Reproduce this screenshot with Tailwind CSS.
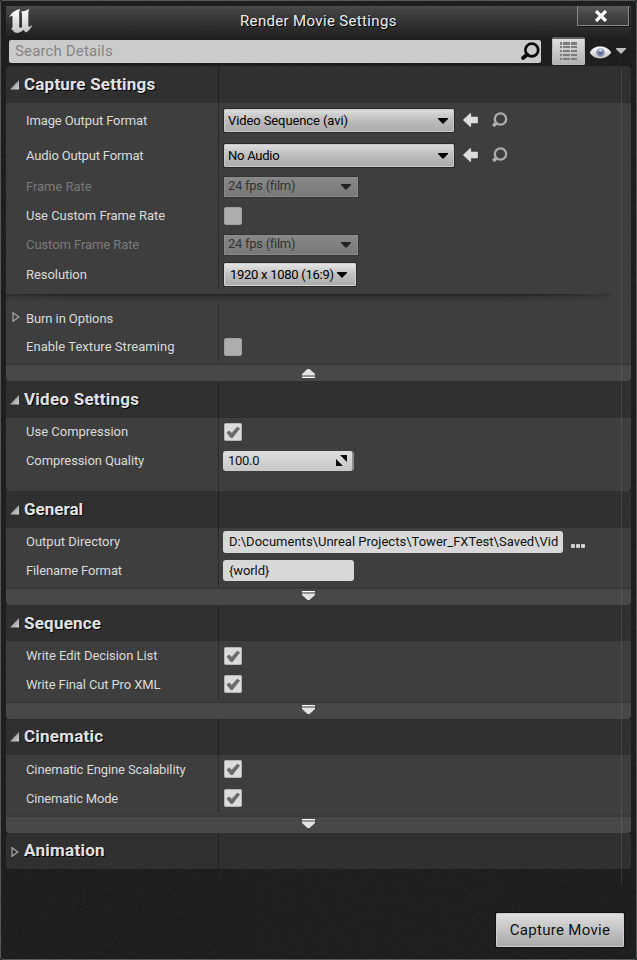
<!DOCTYPE html>
<html lang="en">
<head>
<meta charset="utf-8">
<title>Render Movie Settings</title>
<script src="https://cdn.jsdelivr.net/npm/@tailwindcss/browser@4"></script>
</head>
<body class="bg-[#1e1e1e]">
<svg width="0" height="0" class="absolute">
  <defs>
    <linearGradient id="silver" x1="0" y1="0" x2="0" y2="1"><stop offset="0" stop-color="#fff"/><stop offset="1" stop-color="#c4c4c4"/></linearGradient>
    <linearGradient id="tri" x1="0" y1="0" x2="1" y2="1"><stop offset="0" stop-color="#777"/><stop offset="1" stop-color="#d4d4d4"/></linearGradient>
    <symbol id="open" viewBox="0 0 10 10"><path d="M9 0V9.500H0Z" fill="url(#tri)"/></symbol>
    <symbol id="closed" viewBox="0 0 8 10"><path d="M1 .7V9.300L6.800 5Z" fill="none" stroke="#a5a5a5" stroke-width="1.200"/></symbol>
    <symbol id="check" viewBox="0 0 18 18"><rect x=".5" y=".5" width="17" height="17" rx="1" fill="#dcdcdc" stroke="#b4b4b4"/><path d="M2.800 9.700L5.300 7.800L7.600 10.200L13.300 4L15.700 5.600L8.500 14.700H6.800Z" fill="#6a6a6a" stroke="#6a6a6a" stroke-width=".6"/></symbol>
    <symbol id="back" viewBox="0 0 15 14"><path d="M.8 7L7.500 .8V4.300H14.200V9.700H7.500V13.200Z" fill="#dedede" stroke="#dedede" stroke-width="1.200" stroke-linejoin="round"/></symbol>
    <symbol id="lens" viewBox="0 0 20 19"><circle cx="11.800" cy="8" r="6.400" fill="none" stroke="currentColor" stroke-width="2.700"/><path d="M7.200 12.500L3 16" stroke="currentColor" stroke-width="3.800" stroke-linecap="round"/></symbol>
    <symbol id="find" viewBox="0 0 16 15"><circle cx="8.500" cy="7" r="5.700" fill="none" stroke="#adadad" stroke-width="2.300"/><path d="M5 10.500L1.200 14" stroke="#adadad" stroke-width="3.600"/></symbol>
    <symbol id="down" viewBox="0 0 10 6"><path d="M0 0H10V1L5 6L0 1Z" fill="currentColor"/></symbol>
    <symbol id="more" viewBox="0 0 13 9"><path d="M0 0H13V1H0Z" fill="#fff"/><path d="M0 1H13V2H0Z" fill="#8d8d8d"/><path d="M0 2.500H13V4L7.500 9H5.500L0 4Z" fill="#e3e3e3"/></symbol>
    <symbol id="less" viewBox="0 0 13 9"><path d="M0 8H13V9H0Z" fill="#fff"/><path d="M0 7H13V8H0Z" fill="#8d8d8d"/><path d="M0 6.500H13V5L7.500 0H5.500L0 5Z" fill="#e3e3e3"/></symbol>
  </defs>
</svg>

<div class="relative isolate flex h-[960px] w-[637px] flex-col overflow-hidden rounded-[3px] border border-[#565858] bg-[#1c1c1c] px-[5px] pt-[5px] font-[Roboto,sans-serif] text-[13px] leading-none text-[#dadada]">
  <svg class="absolute inset-0 -z-10 h-full w-full opacity-[0.04]"><filter id="grain"><feTurbulence type="fractalNoise" baseFrequency=".28" numOctaves="3"/><feColorMatrix type="saturate" values="0"/></filter><rect width="100%" height="100%" filter="url(#grain)"/></svg>

  <header class="relative flex h-[33px] shrink-0 bg-linear-to-b from-[#494949] via-[#333333] to-[#1f1f1f]/60">
    <svg class="ml-[2px] mt-[2px] h-[26px] w-[26px]" viewBox="0 0 26 26"><path d="M1 9.500C3 5 7 2 12.500 1L11.200 3V18C11.200 20 12.500 20.500 14 19V5L13 3.500C16 3.500 18.500 2.500 21.500 .8C20.500 3 20.300 4 20.300 6V17.500C20.300 19.500 22 19 24.500 16.500C23 20.500 20.500 23 18 24.500L15.200 22C13 24 10.500 25.300 8 24.800C5 24.500 6 22.500 3 21L4.500 19.500V8.500C4.500 7 3 8 1 9.500Z" fill="url(#silver)"/></svg>
    <h1 class="flex-1 pl-[206px] pt-[8px] text-[15px] tracking-[0.34px] text-[#eeeeee] [text-shadow:1px_1px_0_#000]">Render Movie Settings</h1>
    <button class="mr-[2px] grid h-[20px] w-[52px] place-items-center border border-t-0 border-[#8a8a8a] bg-linear-to-b from-[#5a5a5a] via-[#444] to-[#383838] shadow-[1px_1px_0_#111]">
      <svg class="-ml-[4px]" width="14" height="12" viewBox="0 0 14 12"><path d="M2 1L12 11M12 1L2 11" stroke="#fff" stroke-width="3.200"/></svg>
    </button>
  </header>

  <div class="flex h-[27px] shrink-0 items-start">
    <div class="ml-[3px] mt-px flex h-[23px] w-[532px] items-center rounded-[2px] bg-[#cbcbcb] pl-[6px] pr-[1px] text-[15px] text-[#858585]"><span class="flex-1 tracking-[0.15px]">Search Details</span><svg class="h-[19px] w-[20px] text-[#0c0c0c]"><use href="#lens"/></svg></div>
    <div class="-mt-[2px] ml-[11px] grid h-[28px] w-[33px] place-items-center rounded-[1px] border border-[#b9b9b9] bg-linear-to-b from-[#e0e0e0] to-[#b2b2b2]">
      <svg width="17" height="18" viewBox="0 0 17 18" shape-rendering="crispEdges" fill="#7d7d7d"><path d="M0 0h2v3H0zM3 0h7v3H3zM11 0h6v3h-6zM0 4h2v2H0zM3 4h7v2H3zM11 4h6v2h-6zM0 8h2v2H0zM3 8h7v2H3zM11 8h6v2h-6zM0 12h2v2H0zM3 12h7v2H3zM11 12h6v2h-6zM0 16h2v2H0zM3 16h7v2H3zM11 16h6v2h-6z"/></svg>
    </div>
    <svg class="ml-[4px] mt-[7px] h-[13px] w-[23px]" viewBox="0 0 23 14"><path d="M0 7C4 -1.500 18 -1.500 23 7C18 15.500 4 15.500 0 7Z" fill="url(#silver)"/><circle cx="11.500" cy="7" r="4.600" fill="#8494b4"/><circle cx="11.500" cy="7.500" r="2.200" fill="#5a6a8f"/><circle cx="11.500" cy="4.500" r="1.600" fill="#d3dbea"/></svg>
    <svg class="ml-[4px] mt-[9px] h-[6px] w-[10px] text-[#bcbcbc]"><use href="#down"/></svg>
  </div>

  <main class="relative flex w-[625px] flex-col">
    <section>
      <div class="flex h-[37px] items-center overflow-hidden rounded-t-[4px] bg-[#303030]"><h2 class="flex h-full w-[213px] items-center border-r border-[#1f1f1f] pl-[4px] text-[17px] font-bold tracking-[0.2px] text-[#e2e2e2] [text-shadow:1px_1px_0_#000]"><svg class="mr-[4px] h-[10px] w-[10px]"><use href="#open"/></svg>Capture Settings</h2></div>
      <div class="rounded-b-[4px] bg-[#3e3e3e]">
        <div class="flex h-[35px]"><div class="flex w-[213px] items-center border-r border-[#2a2a2a] pl-[20px] tracking-[-0.12px]">Image Output Format</div>
          <div class="flex items-center pl-[5px]"><div class="flex h-[23px] w-[230px] items-center justify-between whitespace-nowrap rounded-[1px] border border-[#c9c9c9] bg-linear-to-b from-[#dcdcdc] via-[#bdbdbd] to-[#ababab] pl-[3px] pr-[5px] tracking-[-0.1px] text-black shadow-[0_0_0_1px_#2a2a2a]">Video Sequence (avi)<svg class="h-[6px] w-[10px]"><use href="#down"/></svg></div><svg class="mb-[2px] ml-[9px] h-[14px] w-[15px]"><use href="#back"/></svg><svg class="mb-[2px] ml-[14px] h-[15px] w-[16px]"><use href="#find"/></svg></div></div>
        <div class="flex h-[35px]"><div class="flex w-[213px] items-center border-r border-[#2a2a2a] pl-[20px] tracking-[-0.17px]">Audio Output Format</div>
          <div class="flex items-center pl-[5px]"><div class="flex h-[23px] w-[230px] items-center justify-between whitespace-nowrap rounded-[1px] border border-[#c9c9c9] bg-linear-to-b from-[#dcdcdc] via-[#bdbdbd] to-[#ababab] pl-[3px] pr-[5px] tracking-[-0.25px] text-black shadow-[0_0_0_1px_#2a2a2a]">No Audio<svg class="h-[6px] w-[10px]"><use href="#down"/></svg></div><svg class="mb-[2px] ml-[9px] h-[14px] w-[15px]"><use href="#back"/></svg><svg class="mb-[2px] ml-[14px] h-[15px] w-[16px]"><use href="#find"/></svg></div></div>
        <div class="flex h-[28px]"><div class="flex w-[213px] items-center border-r border-[#2a2a2a] pb-[2px] pl-[20px] tracking-[-0.05px] text-[#7a7a7a]">Frame Rate</div>
          <div class="flex items-center pl-[5px]"><div class="flex h-[20px] w-[134px] items-center justify-between whitespace-nowrap border border-[#8b8b8b] bg-linear-to-b from-[#888] to-[#787878] pb-[2px] pl-[3px] pr-[6px] tracking-[-0.28px] text-[#333] shadow-[0_0_0_1px_#353535]"><span class="-mt-[2px]">24 fps (film)</span><svg class="mt-[2px] h-[6px] w-[10px] text-[#222]"><use href="#down"/></svg></div></div></div>
        <div class="flex h-[29px]"><div class="flex w-[213px] items-center border-r border-[#2a2a2a] pl-[20px] tracking-[-0.03px]">Use Custom Frame Rate</div>
          <div class="flex items-center pl-[5px]"><div class="h-[18px] w-[18px] rounded-[2px] border border-[#a0a0a0] bg-[#adadad]"></div></div></div>
        <div class="flex h-[29px]"><div class="flex w-[213px] items-center border-r border-[#2a2a2a] pl-[20px] tracking-[-0.08px] text-[#7a7a7a]">Custom Frame Rate</div>
          <div class="flex items-center pl-[5px]"><div class="flex h-[20px] w-[134px] items-center justify-between whitespace-nowrap border border-[#8b8b8b] bg-linear-to-b from-[#888] to-[#787878] pb-[2px] pl-[3px] pr-[6px] tracking-[-0.28px] text-[#333] shadow-[0_0_0_1px_#353535]"><span class="-mt-[1px]">24 fps (film)</span><svg class="mt-[2px] h-[6px] w-[10px] text-[#222]"><use href="#down"/></svg></div></div></div>
        <div class="flex h-[31px]"><div class="flex w-[213px] items-center border-r border-[#2a2a2a] pl-[20px] tracking-[-0.05px]">Resolution</div>
          <div class="flex items-center pl-[5px]"><div class="flex h-[23px] w-[132px] items-center justify-between whitespace-nowrap rounded-[1px] border border-[#d4d4d4] bg-linear-to-b from-[#e4e4e4] via-[#c0c0c0] to-[#ababab] pl-[5px] pr-[8px] tracking-[-0.27px] text-black shadow-[0_0_0_1px_#2a2a2a]">1920 x 1080 (16:9)<svg class="h-[6px] w-[10px]"><use href="#down"/></svg></div></div></div>
        <div class="h-[14px] pr-[21px] pt-[4px]"><div class="h-[8px] bg-linear-to-b from-[#202020] via-[#333333] via-35% to-[#3e3e3e] [mask-image:linear-gradient(to_right,#0008,#000_10%,#000_85%,#0006)]"></div></div>
        <div class="flex h-[28px]"><div class="flex w-[213px] items-center border-r border-[#2a2a2a] pl-[6px] tracking-[-0.1px]"><svg class="mb-[3px] mr-[6px] h-[10px] w-[8px]"><use href="#closed"/></svg>Burn in Options</div></div>
        <div class="flex h-[29px]"><div class="flex w-[213px] items-center border-r border-[#2a2a2a] pl-[20px] tracking-[0.04px]">Enable Texture Streaming</div>
          <div class="flex items-center pl-[5px]"><div class="h-[18px] w-[18px] rounded-[2px] border border-[#a0a0a0] bg-[#adadad]"></div></div></div>
        <div class="mt-[2px] flex h-[18px] justify-center rounded-b-[4px] border-t-2 border-[#383838] bg-[#484848] pr-[20px] pt-[4px]"><svg class="h-[9px] w-[13px]"><use href="#less"/></svg></div>
      </div>
    </section>

    <section>
      <div class="flex h-[37px] items-center bg-[#303030]"><h2 class="flex h-full w-[213px] items-center border-r border-[#1f1f1f] pl-[4px] text-[17px] font-bold tracking-[0.25px] text-[#e2e2e2] [text-shadow:1px_1px_0_#000]"><svg class="mr-[4px] h-[10px] w-[10px]"><use href="#open"/></svg>Video Settings</h2></div>
      <div class="h-[73px] rounded-b-[4px] bg-[#3e3e3e]">
        <div class="flex h-[28px]"><div class="flex w-[213px] items-center border-r border-[#2a2a2a] pb-[1px] pl-[20px]">Use Compression</div><div class="flex items-center pl-[5px]"><svg class="h-[18px] w-[18px]"><use href="#check"/></svg></div></div>
        <div class="flex h-[29px]"><div class="flex w-[213px] items-center border-r border-[#2a2a2a] pl-[20px] tracking-[-0.1px]">Compression Quality</div><div class="flex items-center pl-[4px]"><div class="flex h-[20px] w-[131px] items-center justify-between rounded-[3px] border-r-2 border-[#8c8c8c] bg-linear-to-b from-[#dedede] to-[#c8c8c8] pl-[5px] pr-[5px] tracking-[-0.3px] text-[#111]">100.0<svg width="11" height="11" viewBox="0 0 11 11"><path d="M0 4V11H7ZM4 0H11V7Z" fill="#0b0b0b"/></svg></div></div></div>
        <div class="h-[15px] w-[213px] border-r border-[#2a2a2a]"></div>
      </div>
    </section>

    <section>
      <div class="flex h-[37px] items-center bg-[#303030]"><h2 class="flex h-full w-[213px] items-center border-r border-[#1f1f1f] pl-[4px] text-[17px] font-bold tracking-[0px] text-[#e2e2e2] [text-shadow:1px_1px_0_#000]"><svg class="mr-[4px] h-[10px] w-[10px]"><use href="#open"/></svg>General</h2></div>
      <div class="rounded-b-[4px] bg-[#3e3e3e]">
        <div class="flex h-[28px]"><div class="flex w-[213px] items-center border-r border-[#2a2a2a] pb-[1px] pl-[20px]">Output Directory</div><div class="flex items-center pl-[4px]"><div class="flex h-[22px] w-[340px] items-center overflow-hidden whitespace-nowrap rounded-[3px] bg-[#d8d8d8] pb-[1px] pl-[6px] tracking-[0.02px] text-[#111]">D:\Documents\Unreal Projects\Tower_FXTest\Saved\Vid</div><svg class="ml-[8px] mt-[8px]" width="14" height="4" viewBox="0 0 14 4" fill="#d2d2d2"><rect width="4" height="4" rx="1"/><rect x="5" width="4" height="4" rx="1"/><rect x="10" width="4" height="4" rx="1"/></svg></div></div>
        <div class="flex h-[31px]"><div class="flex w-[213px] items-center border-r border-[#2a2a2a] pb-[2px] pl-[20px] tracking-[-0.12px]">Filename Format</div><div class="flex items-center pb-[2px] pl-[4px]"><div class="flex h-[21px] w-[131px] items-center rounded-[3px] bg-[#d8d8d8] pl-[6px] tracking-[-0.1px] text-[#111]">{world}</div></div></div>
        <div class="flex h-[18px] justify-center rounded-b-[4px] border-t-2 border-[#383838] bg-[#484848] pr-[20px] pt-[2px]"><svg class="h-[9px] w-[13px]"><use href="#more"/></svg></div>
      </div>
    </section>

    <section>
      <div class="flex h-[36px] items-center bg-[#303030]"><h2 class="flex h-full w-[213px] items-center border-r border-[#1f1f1f] pl-[4px] text-[17px] font-bold tracking-[0.22px] text-[#e2e2e2] [text-shadow:1px_1px_0_#000]"><svg class="mr-[4px] h-[10px] w-[10px]"><use href="#open"/></svg>Sequence</h2></div>
      <div class="rounded-b-[4px] bg-[#3e3e3e]">
        <div class="flex h-[29px]"><div class="flex w-[213px] items-center border-r border-[#2a2a2a] pl-[20px] tracking-[-0.06px]">Write Edit Decision List</div><div class="flex items-center pl-[5px]"><svg class="h-[18px] w-[18px]"><use href="#check"/></svg></div></div>
        <div class="flex h-[29px]"><div class="flex w-[213px] items-center border-r border-[#2a2a2a] pl-[20px] tracking-[-0.12px]">Write Final Cut Pro XML</div><div class="flex items-center pb-[2px] pl-[5px]"><svg class="h-[18px] w-[18px]"><use href="#check"/></svg></div></div>
        <div class="mt-[2px] flex h-[18px] justify-center rounded-b-[4px] border-t-2 border-[#383838] bg-[#484848] pr-[20px] pt-[2px]"><svg class="h-[9px] w-[13px]"><use href="#more"/></svg></div>
      </div>
    </section>

    <section>
      <div class="flex h-[36px] items-center bg-[#303030]"><h2 class="flex h-full w-[213px] items-center border-r border-[#1f1f1f] pb-[2px] pl-[4px] text-[17px] font-bold tracking-[0.22px] text-[#e2e2e2] [text-shadow:1px_1px_0_#000]"><svg class="mr-[4px] mt-[2px] h-[10px] w-[10px]"><use href="#open"/></svg>Cinematic</h2></div>
      <div class="rounded-b-[4px] bg-[#3e3e3e]">
        <div class="flex h-[29px]"><div class="flex w-[213px] items-center border-r border-[#2a2a2a] pl-[20px] tracking-[-0.12px]">Cinematic Engine Scalability</div><div class="flex items-center pb-[1px] pl-[5px]"><svg class="h-[18px] w-[18px]"><use href="#check"/></svg></div></div>
        <div class="flex h-[29px]"><div class="flex w-[213px] items-center border-r border-[#2a2a2a] pl-[20px] tracking-[-0.18px]">Cinematic Mode</div><div class="flex items-center pb-[1px] pl-[5px]"><svg class="h-[18px] w-[18px]"><use href="#check"/></svg></div></div>
        <div class="mt-[2px] flex h-[18px] justify-center rounded-b-[4px] border-t-2 border-[#383838] bg-[#484848] pr-[20px] pt-[2px]"><svg class="h-[9px] w-[13px]"><use href="#more"/></svg></div>
      </div>
    </section>

    <section>
      <div class="flex h-[36px] items-center rounded-[4px] bg-[#303030]"><h2 class="flex h-full w-[213px] items-center border-r border-[#1f1f1f] pb-[2px] pl-[5px] text-[17px] font-bold tracking-[0.28px] text-[#e2e2e2] [text-shadow:1px_1px_0_#000]"><svg class="mr-[5px] mt-[4px] h-[10px] w-[8px]"><use href="#closed"/></svg>Animation</h2></div>
    </section>
    <!-- scrollbar track -->
    <div class="absolute left-[615px] top-[3px] h-[816px] w-px bg-white/10"></div>
  </main>

  <footer class="flex justify-end pr-[7px] pt-[44px]">
    <button class="h-[34px] w-[128px] rounded-[1px] border border-[#cfcfcf] bg-linear-to-b from-[#dedede] to-[#a9a9a9] text-[15px] tracking-[0.3px] text-[#111] shadow-[0_0_0_1px_#111]">Capture Movie</button>
  </footer>
</div>
</body>
</html>
